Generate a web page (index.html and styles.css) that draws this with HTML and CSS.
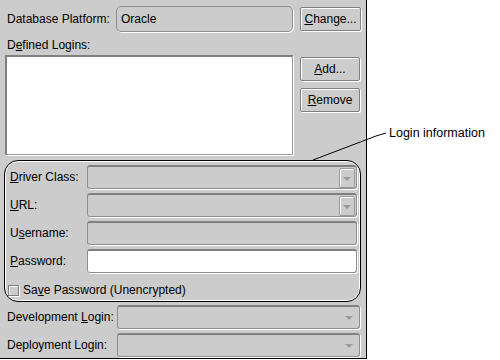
FILE: index.html
```html
<!DOCTYPE html>
<html lang="en">
<head>
  <meta charset="UTF-8" />
  <title>Login settings</title>
  <link rel="stylesheet" href="styles.css">
</head>
<body>
  <div class="panel">
    <div class="row top-row">
      <span class="label platform-label">Database Platform:</span>
      <div class="field platform">Oracle</div>
      <button class="btn change"><u>C</u>hange...</button>
    </div>

    <div class="label defined">D<u>e</u>fined Logins:</div>
    <div class="logins">
      <div class="list"></div>
      <div class="side-buttons">
        <button class="btn"><u>A</u>dd...</button>
        <button class="btn"><u>R</u>emove</button>
      </div>
    </div>

    <div class="group">
      <div class="row grow">
        <span class="label glabel"><u>D</u>river Class:</span>
        <div class="field combo"><span class="arrow-box"><span class="arrow"></span></span></div>
      </div>
      <div class="row grow">
        <span class="label glabel"><u>U</u>RL:</span>
        <div class="field combo"><span class="arrow-box"><span class="arrow"></span></span></div>
      </div>
      <div class="row grow">
        <span class="label glabel">U<u>s</u>ername:</span>
        <div class="field combo"></div>
      </div>
      <div class="row grow">
        <span class="label glabel"><u>P</u>assword:</span>
        <div class="field combo editable"></div>
      </div>
      <label class="check-row">
        <span class="checkbox"></span>
        <span class="label">Sa<u>v</u>e Password (Unencrypted)</span>
      </label>
    </div>

    <div class="row lrow first">
      <span class="label llabel">Development <u>L</u>ogin:</span>
      <div class="field lcombo"><span class="arrow"></span></div>
    </div>
    <div class="row lrow">
      <span class="label llabel">Deployment Login:</span>
      <div class="field lcombo"><span class="arrow"></span></div>
    </div>
  </div>

  <svg class="callout" width="500" height="360" viewBox="0 0 500 360">
    <polyline points="313,160 376,136 386,133" fill="none" stroke="#000" stroke-width="1" />
  </svg>
  <div class="callout-text">Login information</div>
</body>
</html>
```

FILE: styles.css
```css
body {
  margin: 0;
  background: #ffffff;
  font-family: 'Liberation Sans', Arial, sans-serif;
  font-size: 12px;
  color: #000;
  position: relative;
  width: 500px;
  height: 360px;
  overflow: hidden;
}

.panel {
  width: 361px;
  height: 358px;
  background: #cccccc;
  border-right: 1px solid #000;
  border-bottom: 1px solid #000;
  padding-left: 5px;
  box-sizing: content-box;
}

.row {
  display: flex;
  align-items: center;
}

.label {
  white-space: nowrap;
}

.field {
  box-sizing: border-box;
  height: 24px;
  background: #cccccc;
  border: 1px solid #8e8e8e;
  border-top: 2px solid #808080;
  border-radius: 3px;
  box-shadow: 1px 1px 0 #ffffff;
  position: relative;
}

.top-row {
  padding-top: 6px;
}

.platform-label {
  width: 109px;
  padding-left: 2px;
}

.platform {
  width: 177px;
  height: 26px;
  border: 1px solid #8e8e8e;
  border-radius: 5px;
  padding-left: 4px;
  line-height: 24px;
}

.btn {
  font-family: 'Liberation Sans', Arial, sans-serif;
  font-size: 12px;
  color: #000;
  background: #cccccc;
  border: 1px solid #808080;
  border-radius: 2px;
  box-shadow: inset 1px 1px 0 #ffffff, 1px 1px 0 #ffffff;
  padding: 0;
  height: 24px;
  width: 61px;
}

.change {
  margin-left: 7px;
}

.defined {
  margin-top: 6px;
  padding-left: 2px;
  height: 15px;
  line-height: 15px;
}

.logins {
  display: flex;
  margin-top: 2px;
}

.list {
  box-sizing: border-box;
  width: 288px;
  height: 100px;
  background: #ffffff;
  border-top: 2px solid #808080;
  border-left: 2px solid #808080;
  border-right: 1px solid #999;
  border-bottom: 1px solid #999;
  box-shadow: 1px 1px 0 #ffffff;
}

.side-buttons {
  display: flex;
  flex-direction: column;
  gap: 7px;
  margin-left: 7px;
  padding-top: 2px;
}

.side-buttons .btn {
  width: 60px;
}

.group {
  box-sizing: border-box;
  width: 357px;
  margin-left: -1px;
  margin-top: 5px;
  height: 142px;
  border: 1px solid #000;
  border-radius: 14px;
  box-shadow: inset 0 0 0 1px #ffffff;
  padding: 4px 0 0 5px;
  display: flex;
  flex-direction: column;
  gap: 4px;
}

.glabel {
  width: 77px;
}

.combo {
  width: 270px;
}

.editable {
  background: #ffffff;
}

.arrow-box {
  position: absolute;
  right: 1px;
  top: 1px;
  width: 14px;
  height: 18px;
  border: 1px solid #9a9a9a;
  border-radius: 2px;
  box-shadow: inset 1px 1px 0 #ffffff;
}

.arrow {
  position: absolute;
  width: 0;
  height: 0;
  border-left: 4px solid transparent;
  border-right: 4px solid transparent;
  border-top: 4px solid #9a9a9a;
}

.arrow-box .arrow {
  left: 3px;
  top: 8px;
}

.check-row {
  display: flex;
  align-items: center;
  gap: 4px;
  margin-top: 6px;
  margin-left: -2px;
}

.checkbox {
  box-sizing: border-box;
  width: 11px;
  height: 11px;
  border: 1px solid #808080;
  box-shadow: 1px 1px 0 #ffffff, inset 1px 1px 0 #ffffff;
}

.lrow {
  padding-left: 2px;
  margin-top: 4px;
}

.lrow.first {
  margin-top: 3px;
}

.llabel {
  width: 110px;
}

.lcombo {
  width: 243px;
}

.lcombo .arrow {
  right: 6px;
  top: 9px;
}

.callout {
  position: absolute;
  left: 0;
  top: 0;
  pointer-events: none;
}

.callout-text {
  position: absolute;
  left: 389px;
  top: 126px;
  font-size: 12.5px;
  white-space: nowrap;
}
```
